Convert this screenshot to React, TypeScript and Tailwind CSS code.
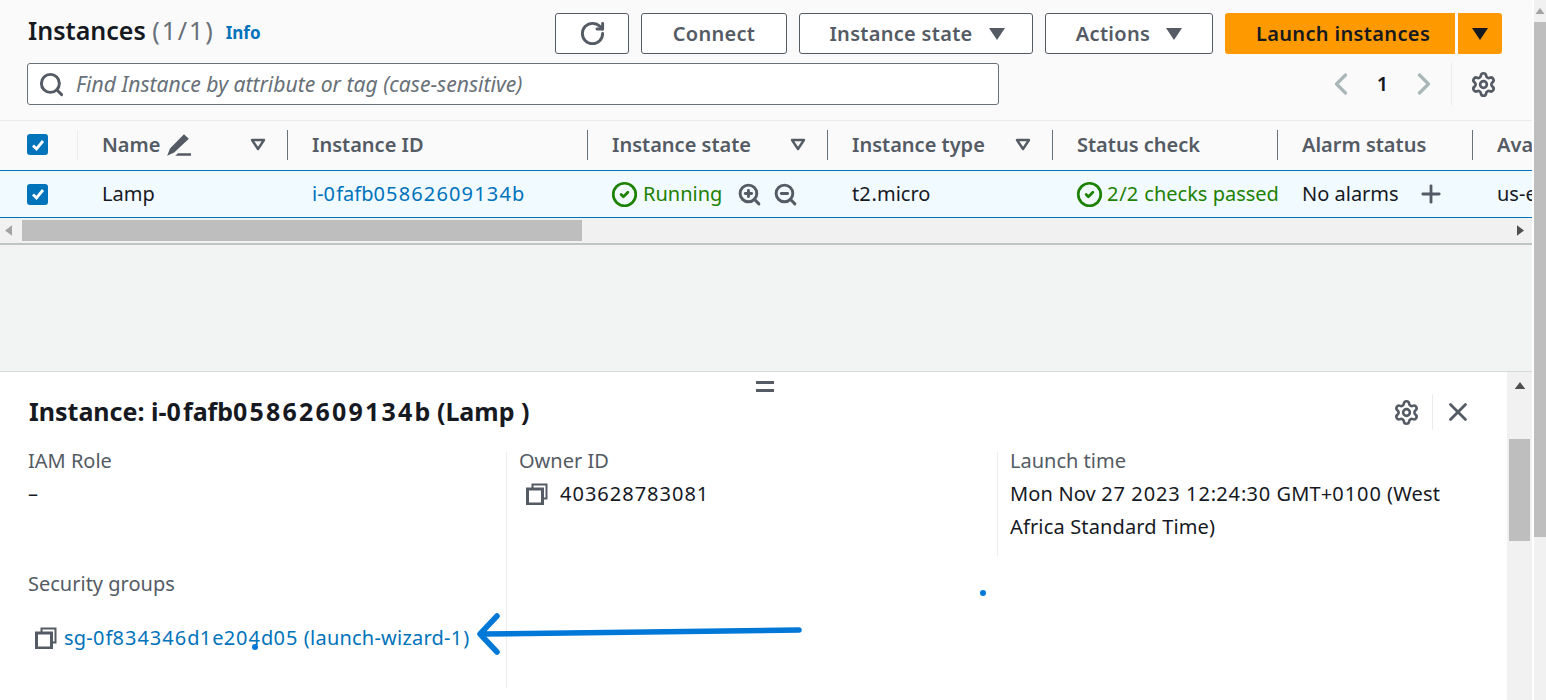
import React from 'react';
import { ChevronLeft, ChevronRight, CircleCheck, Plus, RotateCw, Search, Settings, X, ZoomIn, ZoomOut } from 'lucide-react';

const Caret = ({ className = '' }: { className?: string }) => (
    <svg viewBox="0 0 16 12" className={`w-4 h-3 ${className}`}>
        <path d="M0 0h16L8 12z" fill="currentColor" />
    </svg>
);

const SortCaret = () => (
    <svg viewBox="0 0 16 14" className="w-4 h-[14px] text-[#545b64]">
        <path d="M2 2h12L8 11z" fill="none" stroke="currentColor" strokeWidth="2.4" strokeLinejoin="round" />
    </svg>
);

const Check = () => (
    <span className="w-[21px] h-[21px] rounded-[3px] bg-[#0073bb] flex items-center justify-center">
        <svg viewBox="0 0 16 16" className="w-4 h-4">
            <path d="M3 8.5l3.5 3.5L13 4" fill="none" stroke="white" strokeWidth="2.8" />
        </svg>
    </span>
);

const CopyIcon = () => (
    <svg viewBox="0 0 22 22" className="w-[22px] h-[22px] text-[#545b64] shrink-0">
        <path d="M6.5 5V1.5h14v14H17" fill="none" stroke="currentColor" strokeWidth="2" />
        <rect x="1.5" y="6" width="15" height="15" fill="none" stroke="currentColor" strokeWidth="3" />
    </svg>
);

// the digits in the reference run wider than Noto Sans, so stretch them a little
const Num = ({ text, spacing = 'tracking-[0.9px]' }: { text: string; spacing?: string }) => (
    <>
        {text.split(/(\d+)/).map((part, i) =>
            /^\d+$/.test(part) ? <span key={i} className={spacing}>{part}</span> : <span key={i}>{part}</span>
        )}
    </>
);

const Button = ({ children, className = '' }: { children: React.ReactNode; className?: string }) => (
    <button className={`h-[41px] flex items-center justify-center bg-white border border-[#545b64] rounded-[3px] text-[20px] font-semibold tracking-[0.3px] text-[#545b64] ${className}`}>
        {children}
    </button>
);

const columns = [
    { label: 'Instance ID', width: 'w-[300px]', sort: false },
    { label: 'Instance state', width: 'w-[240px]', sort: true },
    { label: 'Instance type', width: 'w-[225px]', sort: true },
    { label: 'Status check', width: 'w-[225px]', sort: false },
    { label: 'Alarm status', width: 'w-[195px]', sort: false },
    { label: 'Availability Zone', width: 'w-[200px]', sort: false },
];

export default function App() {
    return (
        <div className="relative w-[1546px] h-[700px] overflow-hidden flex bg-white text-[20px] text-[#16191f]" style={{ fontFamily: '"Noto Sans", sans-serif' }}>
            <div className="w-[1532px] flex flex-col shrink-0">
                {/* Instances table */}
                <div className="bg-[#fafafa]">
                    <div className="h-[121px] pl-[28px] pr-[30px] pt-[13px] border-b border-[#eaeded]">
                        <div className="h-[41px] flex items-center">
                            <h1 className="text-[25px] font-semibold leading-none -mt-[7px]">
                                Instances <span className="font-normal text-[#687078] tracking-[1.9px]">(1/1)</span>
                            </h1>
                            <a className="ml-[11px] text-[17px] font-bold text-[#0073bb] -mt-[2px]">Info</a>
                            <div className="ml-auto flex gap-3">
                                <Button className="w-[74px]"><RotateCw size={27} strokeWidth={2.6} /></Button>
                                <Button className="w-[146px]">Connect</Button>
                                <Button className="w-[234px] gap-4 pl-[2px]">Instance state <Caret /></Button>
                                <Button className="w-[168px] gap-4">Actions <Caret /></Button>
                                <div className="flex gap-[3px]">
                                    <button className="w-[230px] h-[41px] pl-[6px] bg-[#ff9900] rounded-l-[3px] font-semibold tracking-[0.35px] text-[#16191f]">Launch instances</button>
                                    <button className="w-[44px] h-[41px] bg-[#ff9900] rounded-r-[3px] flex items-center justify-center"><Caret /></button>
                                </div>
                            </div>
                        </div>
                        <div className="mt-[9px] flex items-center">
                            <div className="-ml-[1px] w-[972px] h-[42px] bg-white border border-[#687078] rounded-[3px] flex items-center pl-[10px]">
                                <Search size={27} strokeWidth={2.6} className="text-[#545b64]" />
                                <span className="ml-[11px] text-[21.1px] italic text-[#687078]">Find Instance by attribute or tag (case-sensitive)</span>
                            </div>
                            <div className="ml-auto flex items-center h-[42px] text-[#aab7b8] pr-[5px]">
                                <ChevronLeft size={36} strokeWidth={2.2} />
                                <span className="w-[47px] text-center font-semibold text-[#16191f]">1</span>
                                <ChevronRight size={36} strokeWidth={2.2} />
                                <span className="ml-[9px] h-[42px] border-l border-[#eaeded] pl-[18px] flex items-center text-[#545b64]">
                                    <Settings size={27} strokeWidth={2.4} />
                                </span>
                            </div>
                        </div>
                    </div>

                    <div className="overflow-hidden">
                        <div className="h-[49px] pb-[2px] flex items-center w-[1700px] font-semibold text-[#545b64]">
                            <div className="w-[78px] h-[30px] pl-[27px] flex items-center border-r border-[#eaeded]"><Check /></div>
                            <div className="w-[210px] h-[30px] pl-[24px] pr-[21px] flex items-center border-r border-[#687078]">
                                Name
                                <svg viewBox="0 0 24 24" className="w-[26px] h-[26px] ml-[5px]" fill="currentColor">
                                    <path d="M17.5 2l4.5 4.2L8.5 19 2 22l2.6-6.8zM9.5 22H24v-2.4H12z" />
                                </svg>
                                <span className="ml-auto"><SortCaret /></span>
                            </div>
                            {columns.map(col => (
                                <div key={col.label} className={`${col.width} h-[30px] pl-[24px] pr-[21px] flex items-center justify-between border-r border-[#687078] whitespace-nowrap`}>
                                    {col.label}
                                    {col.sort && <SortCaret />}
                                </div>
                            ))}
                        </div>
                        <div className="h-[48px] flex items-center w-[1700px] bg-[#f1faff] border-y border-[#0073bb] whitespace-nowrap">
                            <div className="w-[78px] pl-[27px]"><Check /></div>
                            <div className="w-[210px] pl-[24px]">Lamp</div>
                            <div className="w-[300px] pl-[24px] text-[#0073bb]"><Num text="i-0fafb05862609134b" spacing="tracking-[1.15px]" /></div>
                            <div className="w-[240px] pl-[24px] flex items-center text-[#1d8102]">
                                <CircleCheck size={27} strokeWidth={2.4} className="-ml-[1px]" />
                                <span className="ml-[5px]">Running</span>
                                <ZoomIn size={25} strokeWidth={2.8} className="ml-[15px] text-[#545b64]" />
                                <ZoomOut size={25} strokeWidth={2.8} className="ml-[11px] text-[#545b64]" />
                            </div>
                            <div className="w-[225px] pl-[24px]"><Num text="t2.micro" /></div>
                            <div className="w-[225px] pl-[24px] flex items-center text-[#1d8102] overflow-hidden">
                                <CircleCheck size={27} strokeWidth={2.4} className="shrink-0 -ml-[1px]" />
                                <span className="ml-[4px]"><Num text="2/2 checks passed" /></span>
                            </div>
                            <div className="w-[195px] pl-[24px] flex items-center">
                                No alarms
                                <Plus size={28} strokeWidth={2.4} className="ml-[18px] text-[#545b64]" />
                            </div>
                            <div className="pl-[24px]">us-east-1a</div>
                        </div>
                        <div className="h-[25px] bg-[#f1f1f1] flex items-center pl-[5px] pr-[8px]">
                            <svg viewBox="0 0 8 12" className="w-[7px] h-[11px] text-[#a3a3a3]"><path d="M8 0v12L0 6z" fill="currentColor" /></svg>
                            <div className="ml-[10px] w-[560px] h-[21px] bg-[#bebebe]" />
                            <svg viewBox="0 0 8 12" className="ml-auto w-[7px] h-[11px] text-[#505050]"><path d="M0 0v12l8-6z" fill="currentColor" /></svg>
                        </div>
                    </div>
                </div>
                <div className="h-[2px] bg-[#bfc4c4]" />
                <div className="h-[127px] bg-[#f2f3f3] border-b border-[#d5dbdb]" />

                {/* Split panel */}
                <div className="flex-1 flex min-h-0">
                    <div className="w-[1507px] bg-white relative">
                        <div className="absolute left-[756px] top-[9px] w-[18px] h-[11px] border-y-[3px] border-[#545b64]" />
                        <div className="h-[80px] pl-[29px] pr-[34px] pt-[19px] flex items-start">
                            <h2 className="text-[25px] leading-[41px] font-bold whitespace-nowrap"><Num text="Instance: i-0fafb05862609134b (Lamp )" spacing="tracking-[2.2px]" /></h2>
                            <div className="ml-auto flex items-center h-[36px] mt-[3px] text-[#545b64]">
                                <Settings size={27} strokeWidth={2.3} />
                                <span className="ml-[12px] h-[36px] border-l border-[#eaeded] pl-[10px] flex items-center"><X size={30} strokeWidth={2.2} /></span>
                            </div>
                        </div>
                        <div className="grid grid-cols-[507px_491px_491px] grid-rows-[104px_132px] leading-[33px]">
                            <div className="pl-[28px] border-r border-[#eaeded]">
                                <div className="text-[#545b64] -mt-[8px]">IAM Role</div>
                                <div>–</div>
                            </div>
                            <div className="pl-[12px] border-r border-[#eaeded]">
                                <div className="text-[#545b64] -mt-[8px]">Owner ID</div>
                                <div className="flex items-center pl-[7px]"><CopyIcon /><span className="ml-[12px]"><Num text="403628783081" spacing="tracking-[1px]" /></span></div>
                            </div>
                            <div className="pl-[12px] tracking-[0.15px]">
                                <div className="text-[#545b64] -mt-[8px] tracking-normal">Launch time</div>
                                <div className="whitespace-nowrap"><Num text="Mon Nov 27 2023 12:24:30 GMT+0100 (West" spacing="tracking-[0.9px]" /></div>
                                <div className="whitespace-nowrap">Africa Standard Time)</div>
                            </div>
                            <div className="pl-[28px] border-r border-[#eaeded]">
                                <div className="text-[#545b64] mt-[11px]">Security groups</div>
                                <div className="mt-[21px] flex items-center pl-[7px] text-[#0073bb]"><CopyIcon /><span className="ml-[7px] whitespace-nowrap tracking-[0.22px]"><Num text="sg-0f834346d1e204d05 (launch-wizard-1)" spacing="tracking-[1px]" /></span></div>
                            </div>
                        </div>
                    </div>
                    <div className="w-[25px] bg-[#f1f1f1] flex flex-col items-center">
                        <svg viewBox="0 0 12 8" className="w-[12px] h-[7px] mt-[10px] text-[#505050]"><path d="M0 8h12L6 0z" fill="currentColor" /></svg>
                        <div className="mt-[50px] w-[21px] h-[102px] bg-[#bebebe]" />
                    </div>
                </div>
            </div>

            {/* Page scrollbar */}
            <div className="w-[14px] bg-white flex flex-col pl-[2px]">
                <div className="h-[22px] bg-[#f1f1f1] flex justify-center pt-[8px]">
                    <svg viewBox="0 0 12 8" className="w-[10px] h-[6px] text-[#a3a3a3]"><path d="M0 8h12L6 0z" fill="currentColor" /></svg>
                </div>
                <div className="h-[515px] bg-[#bebebe]" />
                <div className="flex-1 bg-[#f1f1f1]" />
            </div>

            {/* Annotation drawn over the screenshot */}
            <svg className="absolute left-0 top-0 pointer-events-none" width="1546" height="700" viewBox="0 0 1546 700">
                <path d="M799 630L481 634M497 616L480 634L497 652" fill="none" stroke="#0078d7" strokeWidth="5.5" strokeLinecap="round" strokeLinejoin="round" />
                <circle cx="983" cy="593" r="3" fill="#0078d7" />
                <circle cx="255" cy="647" r="3" fill="#0078d7" />
            </svg>
        </div>
    );
}
